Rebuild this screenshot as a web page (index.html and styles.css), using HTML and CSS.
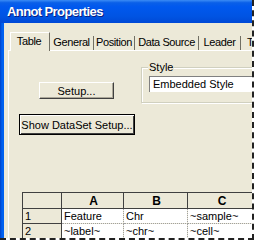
FILE: index.html
```html
<!DOCTYPE html>
<html>
<head>
<meta charset="utf-8">
<link rel="stylesheet" href="styles.css">
</head>
<body>
<div class="clip">
  <div class="win">
    <div class="title">Annot Properties</div>
    <div class="frame">
      <div class="tabs">
        <div class="tab sel t1">Table</div>
        <div class="tab t2">General</div>
        <div class="tab t3">Position</div>
        <div class="tab t4">Data Source</div>
        <div class="tab t5">Leader</div>
        <div class="tab t6">Text</div>
      </div>
      <div class="panel">
        <div class="row1">
          <button class="btn setup">Setup...</button>
          <div class="group">
            <span class="legend">Style</span>
            <div class="field">Embedded Style</div>
          </div>
        </div>
        <button class="btn show">Show DataSet Setup...</button>
        <table class="grid">
          <colgroup><col class="c0"><col class="c1"><col class="c2"><col class="c3"></colgroup>
          <tr><th></th><th>A</th><th>B</th><th>C</th></tr>
          <tr><td class="rh">1</td><td>Feature</td><td>Chr</td><td>~sample~</td></tr>
          <tr><td class="rh">2</td><td>~label~</td><td>~chr~</td><td>~cell~</td></tr>
        </table>
      </div>
    </div>
  </div>
</div>
</body>
</html>
```
FILE: styles.css
```css
html, body {
  margin: 0;
  padding: 0;
  background: #fff;
}
body {
  width: 255px;
  height: 241px;
  overflow: hidden;
  font-family: "Liberation Sans", Arial, sans-serif;
  font-size: 11px;
  color: #000;
}
.clip {
  width: 252px;
  height: 238px;
  overflow: hidden;
  border-right: 2px dashed #222;
  border-bottom: 2px dashed #222;
}
.win {
  width: 300px;
  height: 260px;
  background: linear-gradient(to right, #0041c8, #0061f0 2px, #0055e5);
  display: flex;
  flex-direction: column;
}
.title {
  height: 23px;
  flex: none;
  background: linear-gradient(to bottom, #3b8cf5 0%, #0a5fe8 12%, #0058ee 30%, #0054e3 70%, #0049d6 100%);
  color: #fff;
  font-weight: bold;
  font-size: 13px;
  letter-spacing: -0.6px;
  line-height: 24px;
  padding-left: 7px;
  text-shadow: 1px 1px 0 #0a1e80;
}
.frame {
  flex: 1;
  margin-left: 4px;
  background: #ece9d8;
  padding: 9px 0 0 4px;
  display: flex;
  flex-direction: column;
}
.tabs {
  display: flex;
  align-items: flex-end;
  height: 18px;
  padding-left: 2px;
  white-space: nowrap;
  letter-spacing: -0.4px;
}
.tab {
  box-sizing: border-box;
  flex: none;
  height: 14px;
  line-height: 13px;
  text-align: center;
  border-right: 1px solid #716f64;
  overflow: hidden;
}
.t1 { width: 40px; }
.t2 { width: 44px; }
.t3 { width: 41px; }
.t4 { width: 64px; }
.t5 { width: 42px; }
.t6 { width: 40px; text-align: left; padding-left: 6px; }
.tab.sel {
  height: 19px;
  line-height: 16px;
  padding-right: 2px;
  border-top: 1px solid #fff;
  border-left: 1px solid #fff;
  background: #ece9d8;
  position: relative;
  z-index: 1;
  margin-bottom: -1px;
}
.panel {
  flex: 1;
  border-top: 1px solid #fff;
  border-left: 1px solid #fff;
  background: #ece9d8;
}
.row1 {
  display: flex;
  align-items: flex-start;
}
.btn {
  box-sizing: border-box;
  flex: none;
  font-family: "Liberation Sans", Arial, sans-serif;
  font-size: 11px;
  color: #000;
  background: #ece9d8;
  border: 1px solid;
  border-color: #fff #404040 #404040 #fff;
  box-shadow: inset -1px -1px 0 #aca899;
  padding: 0;
  display: block;
}
.setup {
  width: 75px;
  height: 17px;
  margin: 31px 0 0 30px;
}
.group {
  flex: none;
  margin: 16px 0 0 27px;
  width: 140px;
  height: 34px;
  border: 1px solid #d0d0bf;
  box-shadow: inset 1px 1px 0 #fff, 1px 1px 0 #fff;
  position: relative;
}
.legend {
  position: absolute;
  top: -7px;
  left: 6px;
  padding: 0 1px;
  background: #ece9d8;
  line-height: 12px;
}
.field {
  margin: 8px 0 0 7px;
  height: 15px;
  background: #fff;
  border-top: 1px solid #808080;
  border-left: 1px solid #808080;
  line-height: 15px;
  padding-left: 3px;
}
.show {
  width: 116px;
  height: 21px;
  margin: 11px 0 0 10px;
  border: 1px solid #000;
  box-shadow: inset 1px 1px 0 #fff, inset -1px -1px 0 #404040;
}
.grid {
  margin: 57px 0 0 13px;
  border-collapse: collapse;
  table-layout: fixed;
  width: 232px;
}
.c0 { width: 39px; }
.c1 { width: 62px; }
.c2 { width: 64px; }
.c3 { width: 67px; }
.grid th, .grid td {
  padding: 0 0 0 2px;
  height: 14px;
  line-height: 14px;
  white-space: nowrap;
  overflow: hidden;
}
.grid th {
  height: 15px;
  background: #ece9d8;
  border: 1px solid #404040;
  font-weight: bold;
  font-size: 12px;
  text-align: center;
}
.grid td {
  background: #fff;
  border-right: 1px dotted #a0a0a0;
  border-bottom: 1px dotted #a0a0a0;
}
.grid td.rh {
  background: #ece9d8;
  border: 1px solid #404040;
  border-top: none;
}
```
